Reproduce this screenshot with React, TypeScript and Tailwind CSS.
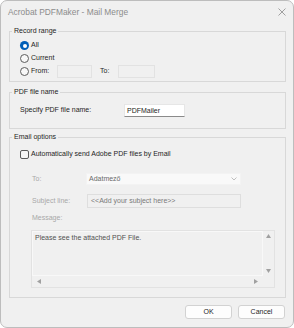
import React from 'react';

function Radio({ checked }: { checked?: boolean }) {
  if (checked) {
    return (
      <span className="w-[9px] h-[9px] rounded-full bg-[#005fb8] flex items-center justify-center shrink-0">
        <span className="w-[4px] h-[4px] rounded-full bg-white" />
      </span>
    );
  }
  return <span className="w-[9px] h-[9px] rounded-full border border-[#5c5c5c] bg-[#f7f7f7] shrink-0" />;
}

function Arrow({ dir }: { dir: 'up' | 'down' | 'left' | 'right' }) {
  const pts = {
    up: '0,4 2.5,0 5,4',
    down: '0,0 5,0 2.5,4',
    left: '4,0 4,5 0,2.5',
    right: '0,0 4,2.5 0,5',
  }[dir];
  const horiz = dir === 'left' || dir === 'right';
  return (
    <svg width={horiz ? 4 : 5} height={horiz ? 5 : 4} viewBox={horiz ? '0 0 4 5' : '0 0 5 4'}>
      <polygon points={pts} fill="#a0a0a0" />
    </svg>
  );
}

export default function App() {
  return (
    <div className="w-[294px] h-[328px] bg-white font-['Liberation_Sans',Arial,sans-serif] text-[7px] text-[#1e1e1e]">
      <div className="w-[294px] h-[328px] border border-[#bdbdbd] rounded-[7px] bg-[#f0f0f0] flex flex-col overflow-hidden">
        {/* title bar */}
        <div className="h-[25px] flex items-start justify-between pl-[7px] pr-[7px] pt-[5px] shrink-0">
          <span className="text-[8.4px] leading-[12px] text-[#8c8c8c]">Acrobat PDFMaker - Mail Merge</span>
          <svg width="8" height="8" viewBox="0 0 8 8" className="mt-[2px]">
            <path d="M0.5 0.5 L7.5 7.5 M7.5 0.5 L0.5 7.5" stroke="#8a8a8a" strokeWidth="0.8" fill="none" />
          </svg>
        </div>

        {/* Record range */}
        <fieldset className="ml-[8px] w-[277px] border border-[#d8d8d8] px-[2px] shrink-0">
          <legend className="px-[2px] leading-[10px]">Record range</legend>
          <div className="pl-[8px] pt-[3px] pb-[3px] flex flex-col">
            <div className="h-[13px] flex items-center gap-[2px]">
              <Radio checked />
              <span>All</span>
            </div>
            <div className="h-[13px] flex items-center gap-[2px]">
              <Radio />
              <span>Current</span>
            </div>
            <div className="h-[13px] flex items-center">
              <Radio />
              <span className="ml-[2px] w-[26px]">From:</span>
              <span className="w-[35px] h-[13px] border border-[#e2e2e2] bg-[#f0f0f0]" />
              <span className="ml-[8px] w-[18px]">To:</span>
              <span className="w-[37px] h-[13px] border border-[#e2e2e2] bg-[#f0f0f0]" />
            </div>
          </div>
        </fieldset>

        {/* PDF file name */}
        <fieldset className="mt-[5px] ml-[8px] w-[277px] border border-[#d8d8d8] px-[2px] shrink-0">
          <legend className="px-[2px] leading-[10px]">PDF file name</legend>
          <div className="pl-[8px] pt-[7px] pb-[11px]">
            <div className="h-[13px] flex items-center">
              <span className="w-[104px]">Specify PDF file name:</span>
              <span className="w-[61px] h-[13px] bg-white border border-[#e6e6e6] border-b-[#8a8a8a] flex items-center pl-[2px] leading-[10px]">
                PDFMailer
              </span>
            </div>
          </div>
        </fieldset>

        {/* Email options */}
        <fieldset className="mt-[3px] ml-[8px] w-[277px] border border-[#d8d8d8] px-[2px] shrink-0">
          <legend className="px-[2px] leading-[10px]">Email options</legend>
          <div className="pl-[8px] pt-[6px] pb-[9px] flex flex-col">
            <div className="h-[13px] flex items-center gap-[2px]">
              <span className="w-[9px] h-[9px] rounded-[2px] border border-[#5c5c5c] bg-[#f7f7f7] shrink-0" />
              <span>Automatically send Adobe PDF files by Email</span>
            </div>

            <div className="mt-[12px] h-[12px] flex items-center">
              <span className="ml-[12px] w-[54px] text-[#a8a8a8]">To:</span>
              <div className="w-[155px] h-[12px] bg-[#f9f9f9] border border-[#f3f3f3] flex items-center justify-between pl-[2px] pr-[3px]">
                <span className="text-[#6a6a6a] leading-[10px]">Adatmező</span>
                <svg width="6" height="4" viewBox="0 0 6 4">
                  <path d="M0.5 0.5 L3 3 L5.5 0.5" stroke="#b0b0b0" strokeWidth="0.8" fill="none" />
                </svg>
              </div>
            </div>

            <div className="mt-[9px] h-[14px] flex items-center">
              <span className="ml-[12px] w-[55px] text-[#a8a8a8]">Subject line:</span>
              <div className="w-[154px] h-[14px] border border-[#dedede] bg-[#f0f0f0] flex items-center pl-[3px]">
                <span className="text-[#7a7a7a] leading-[10px]">&lt;&lt;Add your subject here&gt;&gt;</span>
              </div>
            </div>

            <div className="mt-[5px] h-[10px] flex items-center">
              <span className="ml-[12px] text-[#a8a8a8]">Message:</span>
            </div>

            <div className="mt-[7px] ml-[11px] w-[244px] h-[58px] border border-[#e2e2e2] grid grid-cols-[231px_11px] grid-rows-[45px_11px]">
              <div className="border border-[#f8f8f8] pl-[2px] pt-[1px] text-[#505050] leading-[10px]">
                Please see the attached PDF File.
              </div>
              <div className="flex flex-col items-center justify-between py-[3px]">
                <Arrow dir="up" />
                <Arrow dir="down" />
              </div>
              <div className="flex items-center justify-between px-[5px]">
                <Arrow dir="left" />
                <Arrow dir="right" />
              </div>
              <div />
            </div>
          </div>
        </fieldset>

        {/* buttons */}
        <div className="mt-[7px] flex justify-end gap-[6px] pr-[8px]">
          <button className="w-[47px] h-[14px] bg-[#fdfdfd] border border-[#d2d2d2] rounded-[3px] flex items-center justify-center leading-[10px]">
            OK
          </button>
          <button className="w-[47px] h-[14px] bg-[#fdfdfd] border border-[#d2d2d2] rounded-[3px] flex items-center justify-center leading-[10px]">
            Cancel
          </button>
        </div>
      </div>
    </div>
  );
}
